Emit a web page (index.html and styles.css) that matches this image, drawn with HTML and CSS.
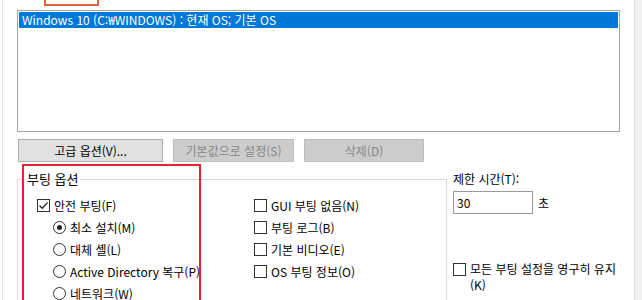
FILE: index.html
```html
<!DOCTYPE html>
<html lang="ko">
<head>
    <meta charset="UTF-8">
    <title>시스템 구성 - 부팅</title>
    <link rel="stylesheet" href="styles.css">
</head>
<body>
    <div class="window">
        <div class="dialog">
            <div class="tab-mark"></div>

            <div class="os-list">
                <div class="os-item selected">Windows 10 (C:₩WINDOWS) : 현재 OS; 기본 OS</div>
            </div>

            <div class="btn-row">
                <button class="btn btn-adv">고급 옵션(V)...</button>
                <button class="btn btn-default" disabled>기본값으로 설정(S)</button>
                <button class="btn btn-del" disabled>삭제(D)</button>
            </div>

            <div class="lower">
                <fieldset class="boot-opts">
                    <legend>부팅 옵션</legend>
                    <div class="opt-cols">
                        <div class="col col-left">
                            <div class="opt">
                                <span class="box">
                                    <svg width="11" height="11" viewBox="0 0 11 11"><path d="M1.5 5.5 L4.2 8.2 L9.6 2.6" fill="none" stroke="#222" stroke-width="1.3"/></svg>
                                </span>안전 부팅(F)
                            </div>
                            <div class="radios">
                                <div class="opt"><span class="radio on"></span>최소 설치(M)</div>
                                <div class="opt"><span class="radio"></span>대체 셸(L)</div>
                                <div class="opt"><span class="radio"></span>Active Directory 복구(P)</div>
                                <div class="opt"><span class="radio"></span>네트워크(W)</div>
                            </div>
                        </div>
                        <div class="col col-right">
                            <div class="opt"><span class="box"></span>GUI 부팅 없음(N)</div>
                            <div class="opt"><span class="box"></span>부팅 로그(B)</div>
                            <div class="opt"><span class="box"></span>기본 비디오(E)</div>
                            <div class="opt"><span class="box"></span>OS 부팅 정보(O)</div>
                        </div>
                    </div>
                </fieldset>

                <div class="side">
                    <div class="timeout-label">제한 시간(T):</div>
                    <div class="timeout-row">
                        <div class="timeout-input">30</div>
                        <span>초</span>
                    </div>
                    <div class="keep">
                        <span class="box"></span>
                        <span class="keep-text">모든 부팅 설정을 영구히 유지<br>(K)</span>
                    </div>
                </div>
            </div>

            <div class="red-mark"></div>
        </div>
        <div class="edge"></div>
    </div>
</body>
</html>
```
FILE: styles.css
```css
body {
    margin: 0;
    background: #fff;
    font-family: "Noto Sans CJK KR", "Noto Sans", sans-serif;
    font-size: 12px;
    color: #000;
}
.window {
    display: flex;
    height: 300px;
    overflow: hidden;
}
.dialog {
    position: relative;
    flex: 1;
    margin-left: 2px;
    border-left: 1px solid #e3e3e3;
    padding: 10px 0 0 14px;
}
.edge {
    width: 7px;
    background: #f0f0f0;
    border-left: 1px solid #e0e0e0;
}

/* annotation marks */
.tab-mark {
    position: absolute;
    left: 41px;
    top: -12px;
    width: 51px;
    height: 14px;
    border: 2px solid #e4623c;
}
.red-mark {
    position: absolute;
    left: 19px;
    top: 164px;
    width: 175px;
    height: 200px;
    border: 2px solid #e8222f;
}

.os-list {
    width: 599px;
    height: 118px;
    border: 1px solid #a3a3a3;
    padding: 1px;
    box-sizing: content-box;
}
.os-item {
    height: 16px;
    line-height: 16px;
    padding-left: 3px;
}
.os-item.selected {
    background: #0078d7;
    color: #fff;
}

.btn-row {
    display: flex;
    gap: 10px;
    margin: 7px 0 0 1px;
}
.btn {
    height: 23px;
    font-family: inherit;
    font-size: 12px;
    border: 1px solid #adadad;
    background: #e1e1e1;
    color: #000;
    padding: 0;
}
.btn:disabled {
    background: #cccccc;
    border-color: #bfbfbf;
    color: #888;
}
.btn-adv { width: 145px; }
.btn-default { width: 121px; }
.btn-del { width: 120px; }

.lower {
    display: flex;
    margin-top: 9px;
}
.boot-opts {
    margin: 0;
    padding: 7px 0 40px 19px;
    width: 409px;
    border: 1px solid #dcdcdc;
    min-width: 0;
}
.boot-opts legend {
    padding: 0 2px;
    margin-left: -12px;
    line-height: 16px;
    font-size: 13px;
}
.opt-cols {
    display: flex;
}
.col-left { width: 217px; }
.radios { margin-left: 16px; }
.opt {
    display: flex;
    align-items: center;
    height: 22px;
    white-space: nowrap;
}
.box {
    flex: none;
    width: 11px;
    height: 11px;
    border: 1px solid #333;
    background: #fff;
    margin-right: 4px;
    display: flex;
}
.radio {
    flex: none;
    width: 11px;
    height: 11px;
    border: 1px solid #333;
    border-radius: 50%;
    margin-right: 4px;
    display: flex;
    align-items: center;
    justify-content: center;
}
.radio.on::after {
    content: "";
    width: 5px;
    height: 5px;
    border-radius: 50%;
    background: #222;
}

.side {
    margin-left: 6px;
    width: 175px;
}
.timeout-label {
    line-height: 16px;
}
.timeout-row {
    display: flex;
    align-items: center;
    gap: 5px;
    margin-top: 4px;
}
.timeout-input {
    width: 75px;
    height: 21px;
    line-height: 21px;
    border: 1px solid #9a9a9a;
    padding-left: 3px;
}
.keep {
    display: flex;
    align-items: flex-start;
    margin-top: 47px;
}
.keep .box {
    margin-top: 2px;
}
.keep-text {
    line-height: 16px;
}
```
